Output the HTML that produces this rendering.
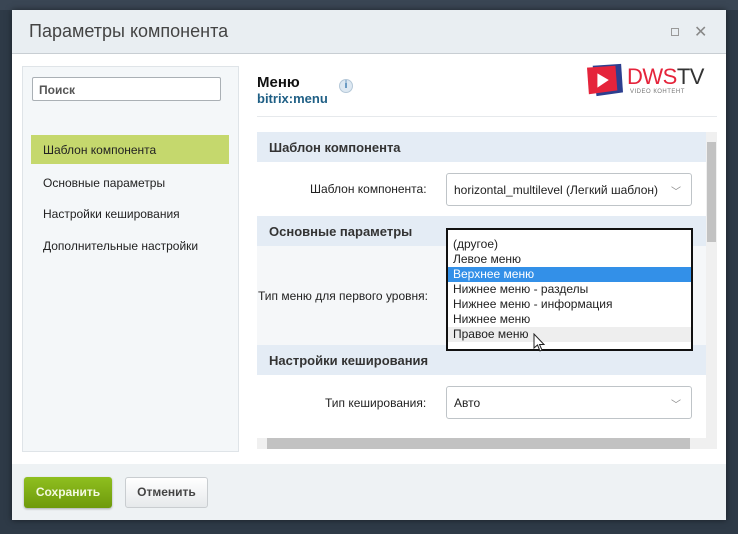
<!DOCTYPE html><html><head><meta charset="utf-8"><style>
*{box-sizing:border-box;margin:0;padding:0}
body{width:738px;height:534px;background:#2e3a47;font-family:"Liberation Sans",sans-serif;position:relative;overflow:hidden;font-size:12px;color:#222}
.a{position:absolute}
.chev{position:absolute;right:10px;top:6px;color:#888;font-size:10px}
</style></head><body>
<div class="a" style="left:0;top:0;width:738px;height:10px;background:#3a4654"></div>
<div class="a" style="left:12px;top:10px;width:714px;height:510px;background:#fff;box-shadow:0 0 6px rgba(0,0,0,.5)">
 <div class="a" style="left:0;top:0;width:714px;height:44px;background:#e9eef2;border-bottom:1px solid #c8ced3"></div>
 <div class="a" style="left:17px;top:11px;font-size:18px;color:#444">Параметры компонента</div>
 <div class="a" style="left:659px;top:18px;width:8px;height:8px;border:1px solid #999"></div>
 <div class="a" style="left:682px;top:12px;font-size:16px;color:#888">✕</div>
 <div class="a" style="left:0;top:454px;width:714px;height:56px;background:#eef2f4"></div>
</div>
<div class="a" style="left:22px;top:66px;width:217px;height:386px;background:#f4f7f9;border:1px solid #dfe4e8"></div>
<div class="a" style="left:32px;top:77px;width:189px;height:24px;background:#fff;border:1px solid #aab0b5;border-radius:2px;padding:5px 6px;font-weight:bold;color:#555;font-size:12px">Поиск</div>
<div class="a" style="left:31px;top:135px;width:198px;height:29px;background:#c5d86d;padding:8px 12px">Шаблон компонента</div>
<div class="a" style="left:43px;top:176px">Основные параметры</div>
<div class="a" style="left:43px;top:207px">Настройки кеширования</div>
<div class="a" style="left:43px;top:239px">Дополнительные настройки</div>
<div class="a" style="left:257px;top:74px;font-size:15px;font-weight:bold;color:#111">Меню</div>
<div class="a" style="left:257px;top:91px;font-size:13px;font-weight:bold;color:#1f5f85">bitrix:menu</div>
<div class="a" style="left:339px;top:79px;width:14px;height:14px;border-radius:50%;background:#dde8f2;border:1px solid #b5c8d8;color:#3a7ab0;font-size:10px;font-weight:bold;text-align:center;line-height:12px">i</div>
<svg class="a" style="left:585px;top:62px" width="40" height="36" viewBox="0 0 42 38"><path d="M8 4 L38 2 L40 32 L12 36 Z" fill="#2c3f8f"/><path d="M2 6 L32 4 L34 30 L4 34 Z" fill="#e5243b"/><path d="M13 12 L25 19 L13 27 Z" fill="#fff"/></svg>
<div class="a" style="left:627px;top:64px;font-size:22px;color:#e5243b;letter-spacing:-0.5px">DWS<span style="color:#333">TV</span></div>
<div class="a" style="left:630px;top:89px;font-size:6px;color:#777;letter-spacing:0.5px">VIDEO КОНТЕНТ</div>
<div class="a" style="left:257px;top:116px;width:460px;height:1px;background:#e6e9ec"></div>
<div class="a" style="left:257px;top:132px;width:449px;height:30px;background:#e4ecf5;padding:8px 12px;font-weight:bold;font-size:13px;color:#333">Шаблон компонента</div>
<div class="a" style="left:310px;top:182px">Шаблон компонента:</div>
<div class="a" style="left:446px;top:173px;width:246px;height:33px;border:1px solid #bfc4c8;border-radius:3px;padding:9px 7px;background:#fff">horizontal_multilevel (Легкий шаблон)<span class="chev" style="top:9px">﹀</span></div>
<div class="a" style="left:257px;top:216px;width:449px;height:30px;background:#e4ecf5;padding:8px 12px;font-weight:bold;font-size:13px;color:#333">Основные параметры</div>
<div class="a" style="left:257px;top:246px;width:449px;height:99px;background:#f5f7f9"></div>
<div class="a" style="left:258px;top:289px">Тип меню для первого уровня:</div>
<div class="a" style="left:257px;top:345px;width:449px;height:30px;background:#e4ecf5;padding:8px 12px;font-weight:bold;font-size:13px;color:#333">Настройки кеширования</div>
<div class="a" style="left:446px;top:228px;width:247px;height:123px;border:2px solid #111;background:#fff;padding-top:7px;line-height:15px">
 <div style="padding-left:5px">(другое)</div>
 <div style="padding-left:5px">Левое меню</div>
 <div style="padding-left:5px;background:#3390e8;color:#fff">Верхнее меню</div>
 <div style="padding-left:5px">Нижнее меню - разделы</div>
 <div style="padding-left:5px">Нижнее меню - информация</div>
 <div style="padding-left:5px">Нижнее меню</div>
 <div style="padding-left:5px;background:#eeeeee">Правое меню</div>
</div>
<svg class="a" style="left:533px;top:333px" width="14" height="20"><path d="M1 1 L1 15 L4.5 12 L7 18 L9 17 L6.5 11.5 L11 11.5 Z" fill="#fff" stroke="#222"/></svg>
<div class="a" style="left:325px;top:396px">Тип кеширования:</div>
<div class="a" style="left:446px;top:386px;width:246px;height:33px;border:1px solid #bfc4c8;border-radius:3px;padding:9px 7px;background:#fff">Авто<span class="chev" style="top:9px">﹀</span></div>
<div class="a" style="left:706px;top:132px;width:11px;height:308px;background:#f0f0f0"></div>
<div class="a" style="left:707px;top:142px;width:9px;height:100px;background:#c2c2c2"></div>
<div class="a" style="left:257px;top:438px;width:460px;height:11px;background:#f0f0f0"></div>
<div class="a" style="left:267px;top:438px;width:423px;height:11px;background:#c2c2c2"></div>
<div class="a" style="left:24px;top:477px;width:88px;height:31px;background:linear-gradient(#8fbf1f,#6e9a0c);border-radius:3px;color:#f4f9e0;font-weight:bold;text-align:center;line-height:31px;box-shadow:0 1px 2px rgba(0,0,0,.3)">Сохранить</div>
<div class="a" style="left:125px;top:477px;width:83px;height:31px;background:linear-gradient(#fff,#e6e9eb);border:1px solid #c9cdd0;border-radius:3px;color:#444;font-weight:bold;text-align:center;line-height:29px">Отменить</div>
</body></html>
